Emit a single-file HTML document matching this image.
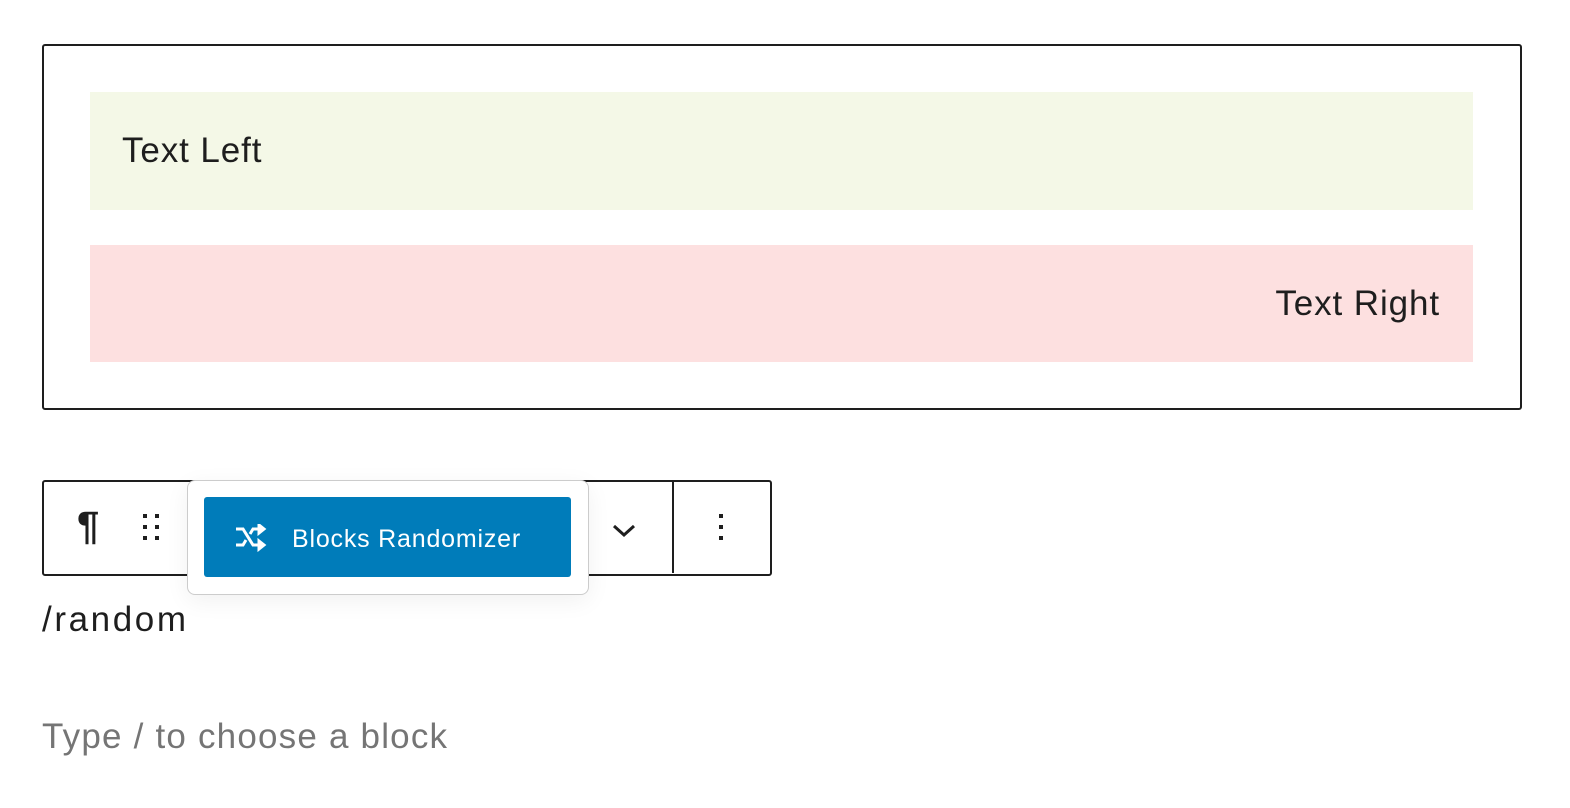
<!DOCTYPE html>
<html><head><style>
body{margin:0;width:1570px;height:808px;background:#fff;font-family:"Liberation Sans",sans-serif;color:#1e1e1e;position:relative;overflow:hidden}
.a{position:absolute}
</style></head><body>
<div class="a" style="left:42px;top:44px;width:1476px;height:362px;border:2px solid #1e1e1e;border-radius:3px"></div>
<div class="a" style="left:90px;top:92px;width:1383px;height:118px;background:#f4f8e7"></div>
<div class="a" style="left:122px;top:130px;font-size:35px;letter-spacing:0.9px;line-height:42px">Text Left</div>
<div class="a" style="left:90px;top:245px;width:1383px;height:117px;background:#fde0e0"></div>
<div class="a" style="right:130px;top:283px;font-size:35px;letter-spacing:0.9px;line-height:42px">Text Right</div>

<div class="a" style="left:42px;top:480px;width:726px;height:92px;border:2px solid #1e1e1e;border-radius:3px"></div>
<div class="a" style="left:672px;top:481px;width:2px;height:92px;background:#1e1e1e"></div>
<div class="a" style="left:77px;top:504px;font-size:40px;font-weight:bold;line-height:44px">¶</div>
<svg class="a" style="left:141px;top:512px" width="24" height="30"><g fill="#1e1e1e"><rect x="2" y="2" width="4" height="4"/><rect x="14" y="2" width="4" height="4"/><rect x="2" y="13" width="4" height="4"/><rect x="14" y="13" width="4" height="4"/><rect x="2" y="24" width="4" height="4"/><rect x="14" y="24" width="4" height="4"/></g></svg>
<svg class="a" style="left:611px;top:521px" width="26" height="18"><path d="M3 5 L13 14 L23 5" fill="none" stroke="#1e1e1e" stroke-width="3"/></svg>
<svg class="a" style="left:717px;top:512px" width="8" height="32"><g fill="#1e1e1e"><rect x="2" y="2" width="4" height="4"/><rect x="2" y="13" width="4" height="4"/><rect x="2" y="24" width="4" height="4"/></g></svg>

<div class="a" style="left:187px;top:480px;width:400px;height:113px;background:#fff;border:1px solid #ccc;border-radius:8px;box-shadow:0 6px 24px rgba(0,0,0,0.06)"></div>
<div class="a" style="left:204px;top:497px;width:367px;height:80px;background:#007cba;border-radius:3px"></div>
<svg class="a" style="left:234px;top:524px" width="34" height="28" fill="none" stroke="#fff" stroke-width="3"><path d="M2 5 H9 L19 21 H28"/><path d="M2 21 H9 L12 16"/><path d="M16 10 L19 5 H28"/><path d="M25 1 L30 5 L25 9 Z M25 17 L30 21 L25 25 Z" fill="#fff"/></svg>
<div class="a" style="left:292px;top:524px;color:#fff;font-size:25px;letter-spacing:0.8px;line-height:30px">Blocks Randomizer</div>

<div class="a" style="left:42px;top:600px;font-size:35px;letter-spacing:2.6px;line-height:40px">/random</div>
<div class="a" style="left:42px;top:717px;font-size:35px;letter-spacing:1.2px;line-height:40px;color:#757575">Type / to choose a block</div>
</body></html>
